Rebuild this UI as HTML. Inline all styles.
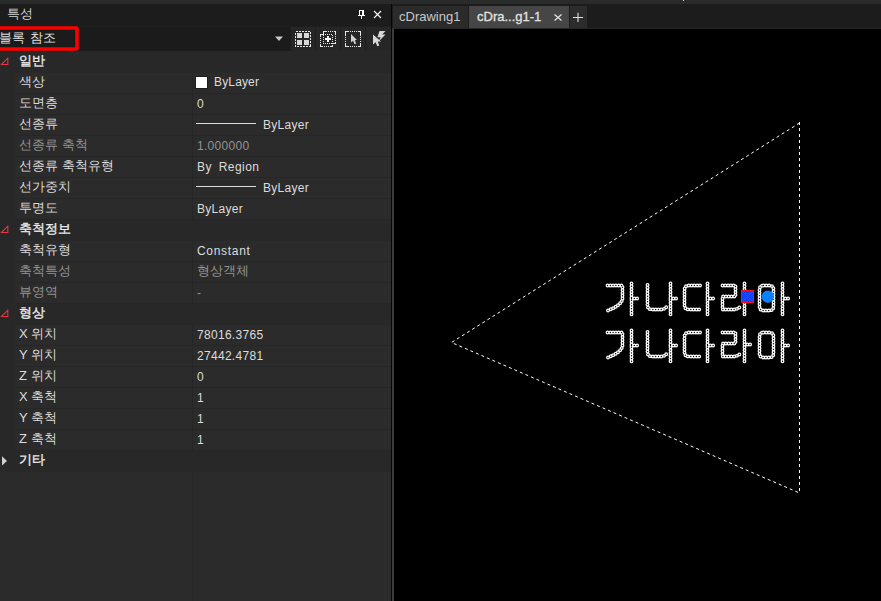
<!DOCTYPE html>
<html><head><meta charset="utf-8">
<style>
html,body{margin:0;padding:0;width:881px;height:601px;overflow:hidden;background:#000;}
body{position:relative;font-family:"Liberation Sans",sans-serif;font-size:12px;color:#dcdcdc;}
.a{position:absolute;white-space:pre;}
.lab{position:absolute;left:19px;line-height:21px;height:21px;font-size:13px;color:#dcdcdc;white-space:pre;}
.hl{color:#ececec;-webkit-text-stroke:0.35px #ececec;}
.val{position:absolute;left:197px;line-height:21px;height:21px;font-size:12px;letter-spacing:0.3px;color:#dcdcdc;white-space:pre;}
.dis{color:#939393;}
</style></head><body>
<div class="a" style="left:0;top:0;width:881px;height:4px;background:#292b2b"></div>
<div class="a" style="left:0;top:51px;width:391px;height:550px;background:#2b2b2b"></div>
<div class="a" style="left:0;top:51px;width:15px;height:420px;background:#282828"></div>
<div class="a" style="left:0;top:4px;width:391px;height:22px;background:#1c1c1c"></div>
<div class="a" style="left:7px;top:3px;line-height:22px;font-size:12.5px;color:#d4d4d4">특성</div>
<svg class="a" style="left:0;top:0" width="391" height="26" shape-rendering="crispEdges"><rect x="359" y="10" width="5" height="5" fill="#fff"/><rect x="360" y="11" width="2" height="4" fill="#1c1c1c"/><rect x="358" y="15" width="7" height="1" fill="#fff"/><rect x="361" y="16" width="1.4" height="3" fill="#fff"/></svg>
<svg class="a" style="left:373px;top:10px" width="10" height="10" viewBox="0 0 10 10"><path d="M1 1L8 8M8 1L1 8" stroke="#fff" stroke-width="1.1"/></svg>
<div class="a" style="left:0;top:26px;width:391px;height:25px;background:#1f1f1f"></div>
<div class="a" style="left:0;top:27px;width:290px;height:24px;background:#1b1b1b"></div>
<div class="a" style="left:-1px;top:26px;line-height:24px;font-size:13px;letter-spacing:0.3px;color:#e0e0e0">블록 참조</div>
<svg class="a" style="left:274px;top:36px" width="10" height="6"><path d="M1 0.5H9L5 5z" fill="#c8c8c8"/></svg>
<div class="a" style="left:291px;top:27px;width:24px;height:24px;background:#262626"></div>
<div class="a" style="left:316px;top:27px;width:24px;height:24px;background:#262626"></div>
<div class="a" style="left:341px;top:27px;width:24px;height:24px;background:#262626"></div>
<div class="a" style="left:366px;top:27px;width:25px;height:24px;background:#262626"></div>
<svg class="a" style="left:0;top:0" width="391" height="51" shape-rendering="crispEdges"><rect x="295.5" y="31.5" width="15" height="15" fill="none" stroke="#e6e6e6" stroke-width="1" stroke-dasharray="2 1"/><rect x="297" y="33" width="5" height="5" fill="#d6d6d6"/><rect x="304" y="33" width="5" height="5" fill="#d6d6d6"/><rect x="297" y="40" width="5" height="5" fill="#d6d6d6"/><rect x="304" y="40" width="5" height="5" fill="#d6d6d6"/><rect x="323.5" y="31.5" width="12" height="12" fill="none" stroke="#e6e6e6" stroke-width="1" stroke-dasharray="1 1"/><rect x="320.5" y="34.5" width="12" height="12" fill="none" stroke="#e6e6e6" stroke-width="1" stroke-dasharray="1 1"/><path d="M323.5 33.5V31.5H325.5M333.5 31.5H335.5V33.5M335.5 41.5V43.5H333.5M320.5 36.5V34.5H322.5M320.5 44.5V46.5H322.5M330.5 46.5H332.5V44.5" fill="none" stroke="#e6e6e6" stroke-width="1"/><path d="M325 38H331V40H325zM327 36H329V42H327z" fill="#fff"/><rect x="345.5" y="31.5" width="15" height="15" fill="none" stroke="#e6e6e6" stroke-width="1" stroke-dasharray="1 1"/><path d="M345.5 34.5V31.5H348.5M357.5 31.5H360.5V34.5M360.5 43.5V46.5H357.5M348.5 46.5H345.5V43.5" fill="none" stroke="#e6e6e6" stroke-width="1"/></svg>
<svg class="a" style="left:0;top:0" width="391" height="51"><path d="M351 34V42.5L353 40.8L354.6 44.3L356.2 43.6L354.8 40.2L357 40Z" fill="#d2d2d2"/><path d="M373 34.5V44.5L375.6 42.2L377.3 46.2L379.3 45.4L377.7 41.6L381 41.4Z" fill="#d8d8d8"/><path d="M379.5 31H385.5L382.2 34.6H385.5L378.6 41.6L380.6 37.2H377.4Z" fill="#d8d8d8"/></svg>
<svg class="a" style="left:0;top:0" width="100" height="60"><rect x="-2" y="28" width="79" height="21" rx="1" fill="none" stroke="#ff0000" stroke-width="3.5"/></svg>
<div class="a" style="left:0;top:51px;width:391px;height:22px;background:#272827"></div>
<svg class="a" style="left:0;top:57px" width="10" height="10"><path d="M1.5 7.5L7.8 1.2V7.5z" fill="none" stroke="#e8323c" stroke-width="1.1"/></svg>
<div class="lab hl" style="top:50px">일반</div>
<div class="a" style="left:15px;top:93px;width:376px;height:1px;background:#262626"></div>
<div class="lab" style="top:71px">색상</div>
<div class="a" style="left:195px;top:76px;width:11px;height:11px;background:#fff;border:1px solid #1e1e1e"></div>
<div class="val" style="left:214px;top:72px;letter-spacing:0.15px">ByLayer</div>
<div class="a" style="left:15px;top:114px;width:376px;height:1px;background:#262626"></div>
<div class="lab" style="top:92px">도면층</div>
<div class="val" style="top:94px">0</div>
<div class="a" style="left:15px;top:135px;width:376px;height:1px;background:#262626"></div>
<div class="lab" style="top:113px">선종류</div>
<div class="a" style="left:196px;top:123px;width:60px;height:1px;background:#dcdcdc"></div>
<div class="val" style="left:263px;top:115px">ByLayer</div>
<div class="a" style="left:15px;top:156px;width:376px;height:1px;background:#262626"></div>
<div class="lab dis" style="top:134px">선종류 축척</div>
<div class="val dis" style="top:136px">1.000000</div>
<div class="a" style="left:15px;top:177px;width:376px;height:1px;background:#262626"></div>
<div class="lab" style="top:155px">선종류 축척유형</div>
<div class="val" style="top:157px;word-spacing:3px;letter-spacing:0.45px">By Region</div>
<div class="a" style="left:15px;top:198px;width:376px;height:1px;background:#262626"></div>
<div class="lab" style="top:176px">선가중치</div>
<div class="a" style="left:196px;top:186px;width:60px;height:1px;background:#dcdcdc"></div>
<div class="val" style="left:263px;top:178px">ByLayer</div>
<div class="a" style="left:15px;top:219px;width:376px;height:1px;background:#262626"></div>
<div class="lab" style="top:197px">투명도</div>
<div class="val" style="top:199px">ByLayer</div>
<div class="a" style="left:0;top:220px;width:391px;height:21px;background:#272827"></div>
<svg class="a" style="left:0;top:225px" width="10" height="10"><path d="M1.5 7.5L7.8 1.2V7.5z" fill="none" stroke="#e8323c" stroke-width="1.1"/></svg>
<div class="lab hl" style="top:218px">축척정보</div>
<div class="a" style="left:15px;top:261px;width:376px;height:1px;background:#262626"></div>
<div class="lab" style="top:239px">축척유형</div>
<div class="val" style="top:241px;letter-spacing:0.7px">Constant</div>
<div class="a" style="left:15px;top:282px;width:376px;height:1px;background:#262626"></div>
<div class="lab dis" style="top:260px">축척특성</div>
<div class="val dis" style="font-size:13px;letter-spacing:0;top:260px">형상객체</div>
<div class="a" style="left:15px;top:303px;width:376px;height:1px;background:#262626"></div>
<div class="lab dis" style="top:281px">뷰영역</div>
<div class="val dis" style="top:283px">-</div>
<div class="a" style="left:0;top:304px;width:391px;height:21px;background:#272827"></div>
<svg class="a" style="left:0;top:309px" width="10" height="10"><path d="M1.5 7.5L7.8 1.2V7.5z" fill="none" stroke="#e8323c" stroke-width="1.1"/></svg>
<div class="lab hl" style="top:302px">형상</div>
<div class="a" style="left:15px;top:345px;width:376px;height:1px;background:#262626"></div>
<div class="lab" style="top:323px">X 위치</div>
<div class="val" style="top:325px">78016.3765</div>
<div class="a" style="left:15px;top:366px;width:376px;height:1px;background:#262626"></div>
<div class="lab" style="top:344px">Y 위치</div>
<div class="val" style="top:346px">27442.4781</div>
<div class="a" style="left:15px;top:387px;width:376px;height:1px;background:#262626"></div>
<div class="lab" style="top:365px">Z 위치</div>
<div class="val" style="top:367px">0</div>
<div class="a" style="left:15px;top:408px;width:376px;height:1px;background:#262626"></div>
<div class="lab" style="top:386px">X 축척</div>
<div class="val" style="top:388px">1</div>
<div class="a" style="left:15px;top:429px;width:376px;height:1px;background:#262626"></div>
<div class="lab" style="top:407px">Y 축척</div>
<div class="val" style="top:409px">1</div>
<div class="a" style="left:15px;top:450px;width:376px;height:1px;background:#262626"></div>
<div class="lab" style="top:428px">Z 축척</div>
<div class="val" style="top:430px">1</div>
<div class="a" style="left:0;top:451px;width:391px;height:21px;background:#272827"></div>
<svg class="a" style="left:1px;top:455px" width="8" height="11"><path d="M1 1.3L6 6L1 10.5z" fill="#d2d2d2"/></svg>
<div class="lab hl" style="top:449px">기타</div>
<div class="a" style="left:192px;top:73px;width:1px;height:21px;background:#262626"></div>
<div class="a" style="left:192px;top:94px;width:1px;height:21px;background:#262626"></div>
<div class="a" style="left:192px;top:115px;width:1px;height:21px;background:#262626"></div>
<div class="a" style="left:192px;top:136px;width:1px;height:21px;background:#262626"></div>
<div class="a" style="left:192px;top:157px;width:1px;height:21px;background:#262626"></div>
<div class="a" style="left:192px;top:178px;width:1px;height:21px;background:#262626"></div>
<div class="a" style="left:192px;top:199px;width:1px;height:21px;background:#262626"></div>
<div class="a" style="left:192px;top:241px;width:1px;height:21px;background:#262626"></div>
<div class="a" style="left:192px;top:262px;width:1px;height:21px;background:#262626"></div>
<div class="a" style="left:192px;top:283px;width:1px;height:21px;background:#262626"></div>
<div class="a" style="left:192px;top:325px;width:1px;height:21px;background:#262626"></div>
<div class="a" style="left:192px;top:346px;width:1px;height:21px;background:#262626"></div>
<div class="a" style="left:192px;top:367px;width:1px;height:21px;background:#262626"></div>
<div class="a" style="left:192px;top:388px;width:1px;height:21px;background:#262626"></div>
<div class="a" style="left:192px;top:409px;width:1px;height:21px;background:#262626"></div>
<div class="a" style="left:192px;top:430px;width:1px;height:21px;background:#262626"></div>
<div class="a" style="left:192px;top:472px;width:1px;height:129px;background:#282828"></div>
<div class="a" style="left:391px;top:4px;width:1px;height:597px;background:#060606"></div>
<div class="a" style="left:392px;top:28px;width:2px;height:573px;background:#3c3c3c"></div>
<div class="a" style="left:392px;top:4px;width:489px;height:24px;background:#1c1c1c"></div>
<div class="a" style="left:393px;top:28px;width:488px;height:1px;background:#242424"></div>
<div class="a" style="left:683px;top:0;width:1px;height:1px;background:#e0e0e0"></div>
<div class="a" style="left:393px;top:6px;width:75px;height:22px;background:#2b2b2b"></div>
<div class="a" style="left:399px;top:6px;line-height:22px;font-size:13px;color:#c8c8c8">cDrawing1</div>
<div class="a" style="left:469px;top:6px;width:100px;height:22px;background:#464646"></div>
<div class="a" style="left:477px;top:6px;line-height:22px;font-size:13px;color:#e2e2e2;-webkit-text-stroke:0.3px #e2e2e2">cDra...g1-1</div>
<svg class="a" style="left:553px;top:13px" width="10" height="10"><path d="M1.5 1.5L8.5 7.5M8.5 1.5L1.5 7.5" stroke="#e0e0e0" stroke-width="1.3"/></svg>
<div class="a" style="left:570px;top:6px;width:17px;height:22px;background:#2b2c2b"></div>
<svg class="a" style="left:572px;top:11px" width="12" height="12"><path d="M6 1.75V11M1 6.5H11" stroke="#e0e0e0" stroke-width="1.1"/></svg>
<svg class="a" style="left:0;top:0" width="881" height="601"><path d="M799.5 123 L451.5 342.5 L799.5 493" fill="none" stroke="#fff" stroke-width="1" stroke-dasharray="3 3"/><path d="M799.5 122 V494" fill="none" stroke="#fff" stroke-width="1" stroke-dasharray="3 3" shape-rendering="crispEdges"/><g id="txt" fill="none" stroke-linecap="round" stroke-linejoin="round"><path d="M607.5 285.5H622.5V299Q621.5 305 608 310.5M631.5 283.5V314.5M631.5 298.5H638.2M647.5 285V305Q647.5 309.5 652 309.5H661Q665 309.5 667 306M670.5 283.5V314.5M670.5 298.5H677.2M700 285.5H689Q684.5 285.5 684.5 290V305Q684.5 309.5 689 309.5H700M707.5 283.5V314.5M707.5 298.5H714.2M722.5 285.5H735.5V296.5H722.5V309.5H733Q738 309.5 741 306M744.5 283.5V314.5M744.5 297.5H751.2M763.5 285.5H769.5Q773.5 285.5 773.5 289.5V306.5Q773.5 310.5 769.5 310.5H763.5Q759.5 310.5 759.5 306.5V289.5Q759.5 285.5 763.5 285.5ZM782.5 283.5V314.5M782.5 298.5H789.2" stroke="#fff" stroke-width="3.9" stroke-dasharray="0 2.8"/><path d="M607.5 285.5H622.5V299Q621.5 305 608 310.5M631.5 283.5V314.5M631.5 298.5H638.2M647.5 285V305Q647.5 309.5 652 309.5H661Q665 309.5 667 306M670.5 283.5V314.5M670.5 298.5H677.2M700 285.5H689Q684.5 285.5 684.5 290V305Q684.5 309.5 689 309.5H700M707.5 283.5V314.5M707.5 298.5H714.2M722.5 285.5H735.5V296.5H722.5V309.5H733Q738 309.5 741 306M744.5 283.5V314.5M744.5 297.5H751.2M763.5 285.5H769.5Q773.5 285.5 773.5 289.5V306.5Q773.5 310.5 769.5 310.5H763.5Q759.5 310.5 759.5 306.5V289.5Q759.5 285.5 763.5 285.5ZM782.5 283.5V314.5M782.5 298.5H789.2" stroke="#000" stroke-width="1.4" stroke-dasharray="0 2.8"/></g><use href="#txt" transform="translate(0 47)"/><rect x="741.5" y="290.5" width="12" height="12" fill="#1440ff" stroke="#ff1010" stroke-width="1"/><path d="M742.5 291.5L752.5 301.5M752.5 291.5L742.5 301.5" stroke="#ff1010" stroke-width="1"/><circle cx="767.8" cy="296.7" r="6.2" fill="#0a80ff"/></svg>
</body></html>
